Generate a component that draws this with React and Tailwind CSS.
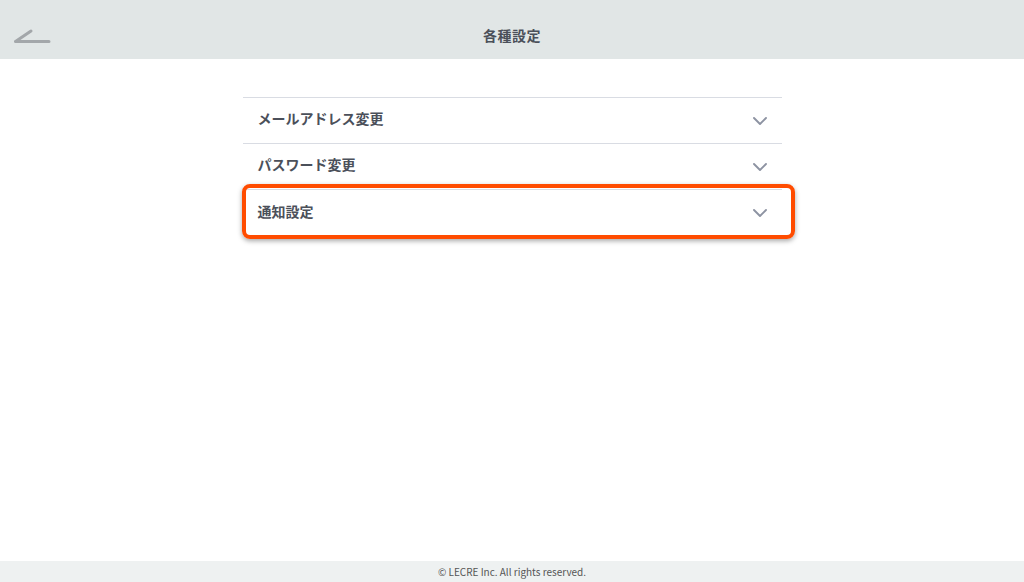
import { ChevronDown } from 'lucide-react';

const ITEMS = [
  { id: 'mail', label: 'メールアドレス変更' },
  { id: 'password', label: 'パスワード変更' },
  { id: 'notify', label: '通知設定', highlight: true },
];

const FONT = { fontFamily: '"Noto Sans CJK JP", "Noto Sans", sans-serif' };

export default function App() {
  return (
    <div className="flex h-[582px] w-[1024px] flex-col bg-white text-[#4b505a]" style={FONT}>
      <header className="relative flex h-[59px] shrink-0 items-center justify-center bg-[#e1e6e6]">
        <button type="button" className="absolute left-[14px] top-[28px]">
          <svg width="38" height="16" viewBox="0 0 38 16" fill="none">
            <path d="M1.5 13.5 L17 3 M1.5 13.5 H35" stroke="#a3a7aa" strokeWidth="3" strokeLinecap="round" />
          </svg>
        </button>
        <h1 className="pt-[12px] text-[14px] font-bold tracking-[0.5px]">各種設定</h1>
      </header>

      <main className="flex-1 pt-[38px]">
        <ul className="mx-auto w-[539px] border-t border-[#d9dce3]">
          {ITEMS.map((item, i) => (
            <li
              key={item.id}
              className={`relative flex h-[46px] items-center justify-between pl-[15px] pr-[10px] ${
                i < ITEMS.length - 1 ? 'border-b border-[#d9dce3]' : ''
              }`}
            >
              <span className="pb-[4px] text-[14px] font-bold">{item.label}</span>
              <ChevronDown className="h-[24px] w-[24px] text-[#8d93a2]" strokeWidth={1.9} />
              {item.highlight && (
                <div className="pointer-events-none absolute -left-[1px] -top-[6px] h-[55px] w-[553px] rounded-[8px] border-[4px] border-[#ff4c00] shadow-[0_2px_5px_rgba(0,0,0,0.35)]" />
              )}
            </li>
          ))}
        </ul>
      </main>

      <footer className="flex h-[21px] shrink-0 items-center justify-center bg-[#eef1f1] text-[10px] text-[#555]">
        © LECRE Inc. All rights reserved.
      </footer>
    </div>
  );
}
